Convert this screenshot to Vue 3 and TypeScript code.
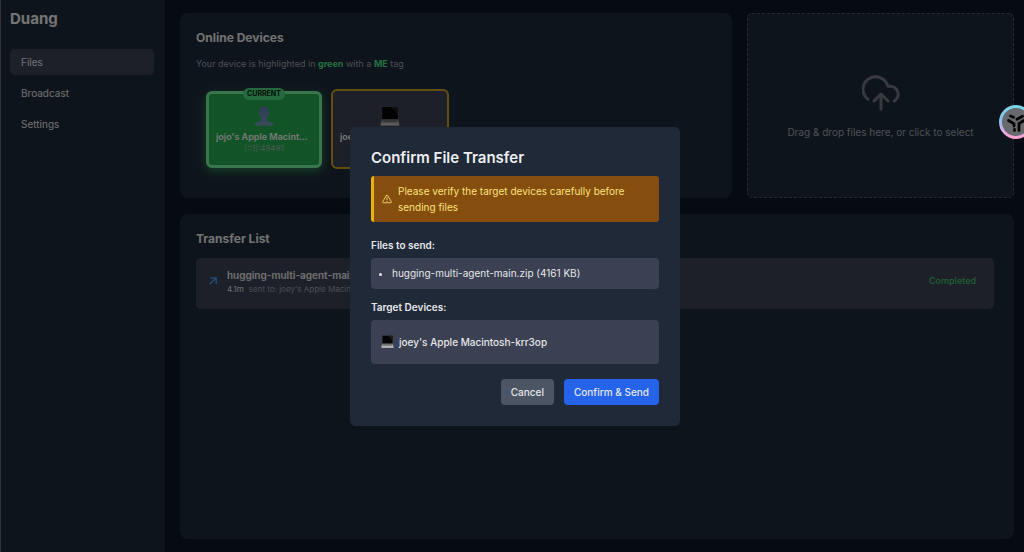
<script setup lang="ts">
import { ref } from 'vue'

interface NavItem {
  label: string
  active: boolean
}

const nav: NavItem[] = [
  { label: 'Files', active: true },
  { label: 'Broadcast', active: false },
  { label: 'Settings', active: false },
]
const files = ref(['hugging-multi-agent-main.zip (4161 KB)'])
const targets = ref(["joey's Apple Macintosh-krr3op"])
</script>

<template>
  <div class="app">
    <svg class="defs" width="0" height="0" aria-hidden="true">
      <defs>
        <linearGradient id="person-fill" x1="0" y1="0" x2="0" y2="1">
          <stop offset="0" stop-color="#5e7ba8" />
          <stop offset="1" stop-color="#7492b8" />
        </linearGradient>
        <linearGradient id="laptop-base" x1="0" y1="0" x2="0" y2="1">
          <stop offset="0" stop-color="#707070" />
          <stop offset="1" stop-color="#d0d0d0" />
        </linearGradient>
        <linearGradient id="ring" x1="0" y1="0" x2="0" y2="1">
          <stop offset="0" stop-color="#79d3ea" />
          <stop offset="0.5" stop-color="#8fc0ea" />
          <stop offset="0.75" stop-color="#d6b0ea" />
          <stop offset="1" stop-color="#ff9fd0" />
        </linearGradient>
        <symbol id="laptop" viewBox="0 0 20 20">
          <path d="M1.6 0.5h16.8v13.5h-16.8z" fill="#4a4a4a" />
          <path d="M2.2 1h15.6v12H2.2z" fill="#050505" />
          <path d="M11 1h6.800v8z" fill="#1d1d1d" />
          <path d="M1.600 13.500h16.800L19.500 19.500h-19z" fill="url(#laptop-base)" />
          <path d="M3 14.300h14l.4 2H2.600z" fill="#6a6a6a" />
        </symbol>
      </defs>
    </svg>

    <aside class="sidebar">
      <h1>Duang</h1>
      <nav>
        <a v-for="item in nav" :key="item.label" href="#" :class="{ active: item.active }">{{ item.label }}</a>
      </nav>
    </aside>

    <main>
      <section class="panel devices">
        <h2>Online Devices</h2>
        <p class="hint">Your device is highlighted in <b>green</b> with a <b>ME</b> tag</p>
        <div class="device-list">
          <button class="device current" type="button">
            <span class="tag">CURRENT</span>
            <svg class="device-icon" viewBox="0 0 20 20" aria-hidden="true">
              <path fill="url(#person-fill)" d="M10 .5c3.200 0 5.200 2.300 5.200 5.600 0 2.600-1.100 4.800-2.500 6v1.500c0 1 1.100 1.500 3 2.100 2.300.7 3.800 1.600 3.900 3.800H.400c.1-2.200 1.600-3.100 3.900-3.800 1.900-.6 3-1.100 3-2.100v-1.500c-1.400-1.200-2.500-3.400-2.500-6C4.800 2.800 6.800.5 10 .5z" />
            </svg>
            <span class="name">jojo's Apple Macintosh</span>
            <span class="address">[::1]:49491</span>
          </button>
          <button class="device selected" type="button">
            <svg class="device-icon" aria-hidden="true"><use href="#laptop" /></svg>
            <span class="name">joey's Apple Macintosh</span>
          </button>
        </div>
      </section>

      <button class="dropzone" type="button">
        <svg viewBox="0 0 38 36" aria-hidden="true">
          <path d="M5.700 24.200A12.600 12.600 0 1 1 25.800 11.200h2A8 8 0 0 1 32.300 26" />
          <path d="M19 34V19.500M12 26l7-7 7 7" />
        </svg>
        <span>Drag &amp; drop files here, or click to select</span>
      </button>

      <section class="panel transfers">
        <h2>Transfer List</h2>
        <div class="transfer">
          <svg class="arrow" viewBox="0 0 8 8" aria-hidden="true"><path d="M.7 7.300 7 1M1 .8h6.200V7" /></svg>
          <div class="transfer-info">
            <strong>hugging-multi-agent-main.zip</strong>
            <p><span class="size">4.1m</span><span>sent to: joey's Apple Macintosh-krr3op</span></p>
          </div>
          <span class="status">Completed</span>
        </div>
      </section>
    </main>

    <div class="overlay">
      <div class="modal" role="dialog" aria-modal="true" aria-labelledby="dialog-title">
        <h2 id="dialog-title">Confirm File Transfer</h2>
        <div class="warning" role="alert">
          <svg viewBox="0 0 24 24" aria-hidden="true">
            <path d="M10.300 3.900 1.900 18a2 2 0 0 0 1.700 3h16.800a2 2 0 0 0 1.700-3L13.700 3.900a2 2 0 0 0-3.400 0z" />
            <path d="M12 9v4.500M12 17v.5" />
          </svg>
          <p>Please verify the target devices carefully before sending files</p>
        </div>
        <h3>Files to send:</h3>
        <ul class="box files">
          <li v-for="file in files" :key="file">{{ file }}</li>
        </ul>
        <h3>Target Devices:</h3>
        <div class="box targets">
          <div v-for="target in targets" :key="target" class="target">
            <svg aria-hidden="true"><use href="#laptop" /></svg>
            <span>{{ target }}</span>
          </div>
        </div>
        <div class="actions">
          <button type="button" class="cancel">Cancel</button>
          <button type="button" class="confirm">Confirm &amp; Send</button>
        </div>
      </div>
    </div>

    <button class="assistant" type="button" aria-label="Assistant">
      <svg viewBox="0 0 34 34" aria-hidden="true">
        <circle cx="17" cy="17" r="15.500" fill="#68696e" stroke="url(#ring)" stroke-width="3" />
        <g fill="none" stroke="#050505" stroke-width="2.800" stroke-linecap="round" stroke-linejoin="round">
          <path d="M11.500 11l3 1.300M18 14.300l5.500-3" />
          <path d="M9.500 15.500l5.500 3.200v2.300M15.500 24.500v1" />
          <path d="M25 15.500l-5 3v7" />
        </g>
      </svg>
    </button>
  </div>
</template>

<style>
body {
  margin: 0;
  background: #0b1322;
}
</style>

<style scoped>
* {
  box-sizing: border-box;
}

h1, h2, h3, p, ul {
  margin: 0;
  padding: 0;
}

button {
  font: inherit;
  color: inherit;
  border: 0;
  cursor: pointer;
}

.app {
  position: relative;
  display: flex;
  min-height: 100vh;
  overflow: hidden;
  border-left: 1px solid #2f343a;
  background: #0c1526;
  color: #e5e7eb;
  font: 10px/16px Inter, "Noto Sans", sans-serif;
}

.defs {
  position: absolute;
}

.sidebar {
  flex: 0 0 164px;
  padding: 8px 11px 8px 9px;
  background: #1d2937;
}

h1 {
  font-size: 15px;
  line-height: 22px;
  color: #eaeaea;
}

nav {
  display: flex;
  flex-direction: column;
  gap: 5px;
  margin-top: 19px;
}

nav a {
  padding: 5px 11px;
  border-radius: 5px;
  color: #e0e0e3;
  text-decoration: none;
}

nav a.active {
  background: #3b4152;
}

main {
  flex: 1;
  min-width: 0;
  display: grid;
  grid-template-columns: minmax(0, 552fr) minmax(0, 267fr);
  grid-template-rows: 185px 1fr;
  gap: 16px 15px;
  padding: 13px 10px 13px 15px;
}

.panel {
  padding: 16px 20px 16px 16px;
  border-radius: 8px;
  background: #1d2937;
}

.panel h2 {
  font-size: 12px;
  line-height: 18px;
  color: #e6e6e6;
}

.hint {
  margin-top: 8px;
  font-size: 9px;
  line-height: 18px;
  color: #989ca6;
}

.hint b {
  color: #4ade80;
}

.device-list {
  display: flex;
  align-items: center;
  gap: 9px;
  margin: 16px 10px 0;
}

.device {
  position: relative;
  display: flex;
  flex-direction: column;
  align-items: center;
  width: 118px;
  height: 80px;
  padding: 0 7px;
  border-radius: 6px;
}

.device.selected {
  padding-bottom: 8px;
  justify-content: center;
  border: 2px solid #c99a1e;
  background: #3b4152;
}

.device.current {
  width: 116px;
  height: 77px;
  justify-content: center;
  border: 3px solid #74ea9c;
  background: #24a84e;
  box-shadow: 0 3px 10px #28804c;
}

.tag {
  position: absolute;
  top: -6px;
  left: 50%;
  transform: translateX(-50%);
  padding: 0 4px;
  border-radius: 6px;
  background: #4ad57d;
  color: #06250f;
  font-size: 7px;
  line-height: 12px;
  font-weight: 700;
}

.device-icon {
  flex: none;
  width: 20px;
  height: 20px;
}

.name {
  width: 100%;
  margin-top: 4px;
  overflow: hidden;
  font-size: 9px;
  line-height: 14px;
  font-weight: 600;
  text-overflow: ellipsis;
  white-space: nowrap;
  color: #f0f0f0;
}

.address {
  font-size: 8px;
  line-height: 9px;
  color: #a3b0ae;
}

.dropzone {
  display: flex;
  flex-direction: column;
  align-items: center;
  justify-content: center;
  gap: 13px;
  padding: 3px 0 0;
  border: 1px dashed #4b5563;
  border-radius: 5px;
  background: #1d2937;
  color: #9ca1ab;
}

.dropzone svg {
  width: 38px;
  height: 36px;
  fill: none;
  stroke: #727580;
  stroke-width: 3;
  stroke-linecap: round;
  stroke-linejoin: round;
}

.transfers {
  grid-column: 1 / -1;
}

.transfer {
  display: flex;
  align-items: center;
  margin-top: 10px;
  padding: 9px 18px 14px 13px;
  border-radius: 5px;
  background: #3b4152;
}

.arrow {
  flex: none;
  width: 8px;
  height: 8px;
  margin-right: 10px;
  fill: none;
  stroke: #4b9bff;
  stroke-width: 1.3;
}

.transfer-info {
  flex: 1;
  min-width: 0;
}

.transfer-info strong {
  display: block;
  font-size: 10px;
  font-weight: 600;
  color: #e2e2e4;
}

.transfer-info p {
  display: flex;
  gap: 5px;
  font-size: 8px;
  line-height: 12px;
  color: #979ca8;
}

.size {
  color: #dcdee2;
}

.status {
  font-size: 9px;
  font-weight: 500;
  color: #3fc26d;
}

.overlay {
  position: absolute;
  inset: 0;
  display: flex;
  align-items: center;
  justify-content: center;
  padding-left: 5px;
  background: rgba(0, 0, 0, 0.5);
}

.modal {
  width: 330px;
  padding: 21px;
  border-radius: 5px;
  background: #202937;
}

.modal h2 {
  font-size: 15px;
  font-weight: 600;
  line-height: 20px;
  color: #eceef1;
}

.warning {
  display: flex;
  align-items: center;
  gap: 6px;
  margin: 8px 0 15px;
  padding: 7px 8px;
  border-left: 3px solid #eab308;
  border-radius: 3px;
  background: #854d0e;
  color: #fbe47c;
}

.warning svg {
  flex: none;
  width: 10px;
  height: 10px;
  fill: none;
  stroke: currentColor;
  stroke-width: 2;
  stroke-linecap: round;
  stroke-linejoin: round;
}

.modal h3 {
  font-size: 10px;
  font-weight: 600;
}

.box {
  margin: 5px 0 10px;
  border-radius: 4px;
  background: #3b4152;
}

.files {
  padding: 7px 8px 8px 21px;
}

.targets {
  padding: 14px 10px;
  margin-bottom: 15px;
}

.target {
  display: flex;
  align-items: center;
  gap: 5px;
  font-weight: 500;
}

.target svg {
  width: 13px;
  height: 13px;
}

.actions {
  display: flex;
  justify-content: flex-end;
  gap: 10px;
}

.actions button {
  padding: 5px 10px;
  border-radius: 4px;
  font-weight: 500;
}

.cancel {
  background: #4b5563;
}

.confirm {
  background: #2563eb;
}

.assistant {
  position: absolute;
  top: 105px;
  right: -9px;
  width: 34px;
  height: 34px;
  padding: 0;
  border-radius: 50%;
  background: none;
}

.assistant svg {
  display: block;
}
</style>
